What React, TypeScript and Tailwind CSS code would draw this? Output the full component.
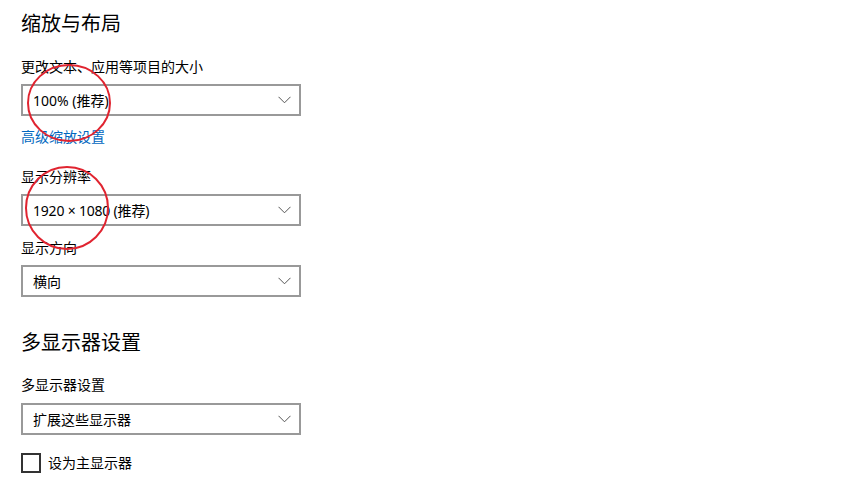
const font = { fontFamily: '"Noto Sans", "Noto Sans CJK SC", sans-serif' }

function Chevron() {
  return (
    <svg width="13" height="8" viewBox="0 0 13 8" className="shrink-0">
      <path d="M0.5 0.8 L6.5 6.8 L12.5 0.8" fill="none" stroke="#555" strokeWidth="1" />
    </svg>
  )
}

function Select({ value, className = '' }: { value: string; className?: string }) {
  return (
    <div
      className={`flex h-8 w-[280px] items-center justify-between border-2 border-[#999] bg-white pl-[10px] pr-[8px] text-[14px] text-black ${className}`}
    >
      <span>{value}</span>
      <Chevron />
    </div>
  )
}

export default function App() {
  return (
    <div className="relative h-[496px] w-[859px] overflow-hidden bg-white" style={font}>
      <div className="flex flex-col items-start pl-[21px] pt-[10px] text-black">
        <h2 className="text-[20px] leading-[28px]">缩放与布局</h2>
        <div className="mt-[19px] text-[14px] leading-[20px]">更改文本、应用等项目的大小</div>
        <Select value="100% (推荐)" className="mt-[7px]" />
        <a className="mt-[11px] text-[14px] leading-[20px] text-[#0067c0]">高级缩放设置</a>

        <div className="mt-[20px] text-[14px] leading-[20px]">显示分辨率</div>
        <Select value="1920 × 1080 (推荐)" className="mt-[7px] tracking-[-0.2px]" />

        <div className="mt-[12px] text-[14px] leading-[20px]">显示方向</div>
        <Select value="横向" className="mt-[7px]" />

        <h2 className="mt-[32px] text-[20px] leading-[28px]">多显示器设置</h2>
        <div className="mt-[18px] text-[14px] leading-[20px]">多显示器设置</div>
        <Select value="扩展这些显示器" className="mt-[8px]" />

        <label className="mt-[18px] flex items-center gap-[7px] text-[14px] leading-[20px]">
          <span className="h-5 w-5 border-2 border-[#333]" />
          <span>设为主显示器</span>
        </label>
      </div>

      <svg className="pointer-events-none absolute left-0 top-0" width="859" height="496">
        <ellipse cx="69" cy="103" rx="41" ry="38" fill="none" stroke="#e02430" strokeWidth="2" />
        <circle cx="67" cy="208" r="41" fill="none" stroke="#e02430" strokeWidth="2" />
      </svg>
    </div>
  )
}
